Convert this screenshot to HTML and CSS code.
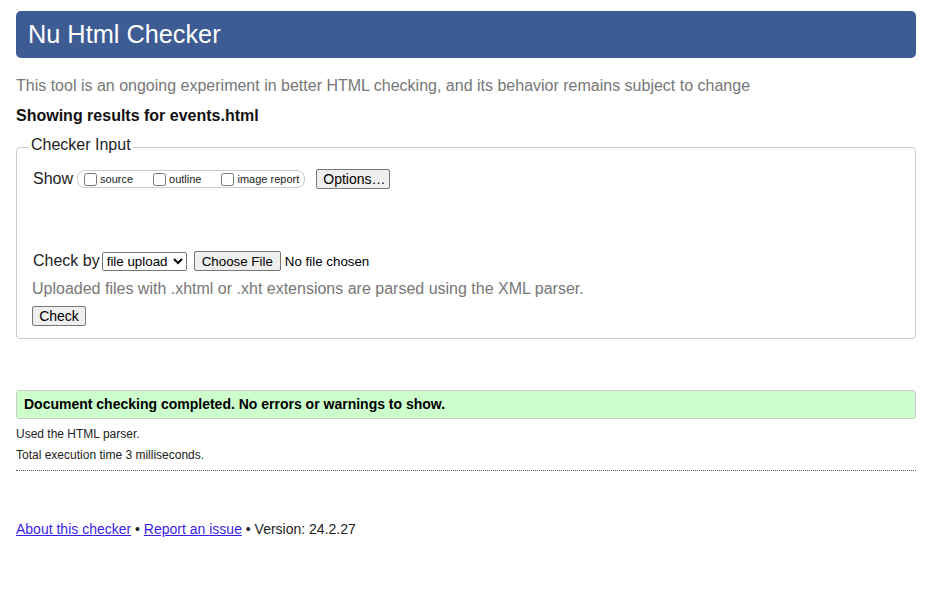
FILE: index.html
```html
<!DOCTYPE html>
<html lang="en">
<head>
<meta charset="utf-8">
<title>Nu Html Checker</title>
<link rel="stylesheet" href="styles.css">
</head>
<body>
<div class="page">
  <h1 class="banner">Nu Html Checker</h1>
  <p class="intro">This tool is an ongoing experiment in better HTML checking, and its behavior remains subject to change</p>
  <p class="results-for">Showing results for events.html</p>
  <form class="checker-form">
    <fieldset class="checker-input">
      <legend class="legend">Checker Input</legend>
      <div class="row show-row">
        <span class="row-label">Show</span>
        <span class="show-group">
          <label class="opt"><input type="checkbox" class="cb">source</label>
          <label class="opt"><input type="checkbox" class="cb">outline</label>
          <label class="opt last"><input type="checkbox" class="cb">image report</label>
        </span>
        <button type="button" class="btn options-btn">Options…</button>
      </div>
      <div class="row checkby-row">
        <span class="row-label">Check by</span>
        <select class="select"><option>file upload</option></select>
        <input type="file" class="file">
      </div>
      <p class="hint">Uploaded files with .xhtml or .xht extensions are parsed using the XML parser.</p>
      <button type="button" class="btn check-btn">Check</button>
    </fieldset>
  </form>
  <p class="success">Document checking completed. No errors or warnings to show.</p>
  <p class="meta meta-first">Used the HTML parser.</p>
  <p class="meta">Total execution time 3 milliseconds.</p>
  <div class="rule"></div>
  <p class="footer"><a href="#" class="link">About this checker</a> • <a href="#" class="link">Report an issue</a> • Version: 24.2.27</p>
</div>
</body>
</html>
```
FILE: styles.css
```css
html, body {
  margin: 0;
  padding: 0;
  background: #fff;
}
body {
  font-family: "Liberation Sans", Arial, sans-serif;
  color: #222;
}
.page {
  padding: 11px 13px 0 16px;
}
.banner {
  margin: 0;
  height: 47px;
  line-height: 47px;
  padding-left: 12px;
  background: #3e5c94;
  color: #fff;
  font-size: 25.3px;
  font-weight: normal;
  border-radius: 5px;
}
.intro {
  margin: 18px 0 0;
  font-size: 16px;
  line-height: 20px;
  color: #777;
}
.results-for {
  margin: 10px 0 0;
  font-size: 16px;
  line-height: 20px;
  font-weight: bold;
  color: #111;
}
.checker-form {
  margin: 10px 0 0;
}
.checker-input {
  margin: 0;
  padding: 10px 15px 12px 15px;
  border: 1px solid #ccc;
  border-radius: 4px;
  min-width: 0;
}
.legend {
  padding: 0 2px 4px;
  margin-left: -3px;
  font-size: 16px;
  line-height: 18px;
  color: #222;
}
.row {
  display: flex;
  align-items: center;
  height: 22px;
}
.row-label {
  font-size: 16px;
  margin-left: 1px;
}
.show-group {
  display: inline-flex;
  align-items: center;
  margin-left: 4px;
  height: 16px;
  padding: 0 5px 0 2px;
  border: 1px solid #ccc;
  border-radius: 8px;
}
.opt {
  display: inline-flex;
  align-items: center;
  font-size: 11px;
  margin-right: 16px;
}
.opt.last {
  margin-right: 0;
}
.cb {
  margin: 0 3px 0 4px;
  width: 13px;
  height: 13px;
}
.btn {
  font-family: "Liberation Sans", Arial, sans-serif;
  font-size: 14px;
  line-height: 16px;
  height: 20px;
  padding: 0 6px;
  background: #efefef;
  color: #000;
  border: 1px solid #767676;
  border-radius: 2px;
}
.options-btn {
  margin-left: 11px;
  width: 74px;
}
.checkby-row {
  margin-top: 60px;
}
.select {
  margin-left: 2px;
  width: 85px;
  height: 19px;
  font-family: "Liberation Sans", Arial, sans-serif;
  font-size: 13.33px;
  color: #000;
}
.file {
  margin-left: 7px;
  font-family: "Liberation Sans", Arial, sans-serif;
  font-size: 13.33px;
  color: #000;
}
.file::file-selector-button {
  font-family: "Liberation Sans", Arial, sans-serif;
  font-size: 13.33px;
  height: 20px;
  padding: 0 7px;
  background: #efefef;
  border: 1px solid #767676;
  border-radius: 2px;
  margin-right: 4px;
}
.hint {
  margin: 7px 0 0;
  font-size: 16px;
  line-height: 20px;
  color: #777;
}
.check-btn {
  margin-top: 7px;
  display: block;
  width: 54px;
}
.success {
  margin: 51px 0 0;
  padding: 5px 7px;
  font-size: 14px;
  line-height: 17px;
  font-weight: bold;
  color: #000;
  background: #ccffcc;
  border: 1px solid #ccc;
  border-radius: 3px;
}
.meta {
  margin: 5px 0 0;
  font-size: 12px;
  line-height: 16px;
  color: #222;
}
.meta-first {
  margin-top: 7px;
}
.rule {
  margin-top: 7px;
  border-bottom: 1px dotted #555;
}
.footer {
  margin: 49px 0 0;
  font-size: 14px;
  line-height: 18px;
  color: #222;
}
.link {
  color: #3a1ee6;
  text-decoration: underline;
}
```
